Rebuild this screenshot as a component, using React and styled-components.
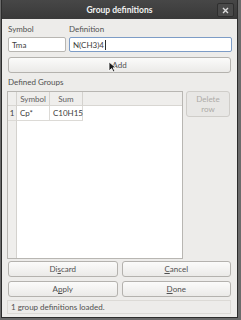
import React from "react";
import styled, { createGlobalStyle } from "styled-components";

const GlobalStyle = createGlobalStyle`
  html, body {
    margin: 0;
    padding: 0;
    background: #4a4a4a;
  }
  body {
    font-family: "Lato", "DejaVu Sans", sans-serif;
    font-size: 8px;
    color: #505050;
  }
`;

const Screen = styled.div`
  width: 241px;
  height: 320px;
  overflow: hidden;
  display: flex;
  background: #6b6b6b;
  padding: 0 4px 3px 2px;
  box-sizing: border-box;
`;

const Window = styled.div`
  flex: 1;
  display: flex;
  flex-direction: column;
  background: #edecea;
  box-shadow: 0 0 0 1px #2c2c2c;
`;

const TitleBar = styled.div`
  height: 19px;
  flex: none;
  display: flex;
  align-items: center;
  justify-content: center;
  position: relative;
  background: linear-gradient(#474747, #393939);
  color: #f2f2f2;
  font-weight: bold;
  font-size: 8.5px;
`;

const CloseButton = styled.div`
  position: absolute;
  right: 3px;
  top: 3px;
  width: 15px;
  height: 12px;
  border: 1px solid #2e2e2e;
  border-radius: 2px;
  background: #4a4a4a;
  display: flex;
  align-items: center;
  justify-content: center;
`;

const Body = styled.div`
  flex: 1;
  display: flex;
  flex-direction: column;
  padding: 5px 5px 3px 6px;
`;

const FieldRow = styled.div`
  display: grid;
  grid-template-columns: 58px 1fr;
  column-gap: 3px;
  row-gap: 2px;
`;

const Label = styled.div`
  height: 11px;
  line-height: 11px;
`;

const Input = styled.div`
  height: 15px;
  box-sizing: border-box;
  border: 1px solid ${(p) => (p.focused ? "#7d9cc6" : "#b8b6b2")};
  background: #ffffff;
  border-radius: 2px;
  padding-left: 3px;
  display: flex;
  align-items: center;
  color: #404040;
`;

const Caret = styled.span`
  display: inline-block;
  width: 1px;
  height: 10px;
  background: #2e2e2e;
  margin-left: 1px;
`;

const Button = styled.div`
  height: ${(p) => p.h || 16}px;
  box-sizing: border-box;
  border: 1px solid #b4b2ae;
  border-radius: 3px;
  background: linear-gradient(#fbfbfa, #ebeae8);
  display: flex;
  flex-direction: column;
  align-items: center;
  justify-content: center;
  color: ${(p) => (p.disabled ? "#adaba7" : "#505050")};
  line-height: 10px;
  text-align: center;
  ${(p) => p.disabled && "background: #e8e7e5; border-color: #cfcdc9;"}
`;

const AddRow = styled.div`
  margin-top: 5px;
  width: 223px;
  position: relative;
`;

const Pointer = styled.svg`
  position: absolute;
  left: 100px;
  top: 4px;
`;

const Section = styled.div`
  margin-top: 4px;
  display: flex;
  flex-direction: column;
`;

const TableRow = styled.div`
  display: flex;
  gap: 3px;
  margin-top: 3px;
  margin-left: -1px;
`;

const Table = styled.div`
  width: 176px;
  height: 168px;
  box-sizing: border-box;
  border: 1px solid #b8b6b2;
  background: #ffffff;
  display: grid;
  grid-template-columns: 9px 33px 33px 1fr;
  grid-template-rows: 14px 15px 1fr;
`;

const HeadCell = styled.div`
  background: #efeeec;
  border-right: ${(p) => (p.last ? "none" : "1px solid #d4d2ce")};
  border-bottom: 1px solid #d8d6d2;
  display: flex;
  align-items: center;
  justify-content: center;
  color: #606060;
`;

const Cell = styled.div`
  border-right: 1px solid #dcdad6;
  border-bottom: 1px solid #dcdad6;
  display: flex;
  align-items: center;
  padding-left: 3px;
  color: #404040;
`;

const RowHead = styled.div`
  background: #efeeec;
  border-right: 1px solid #d4d2ce;
  border-bottom: ${(p) => (p.cell ? "1px solid #dcdad6" : "none")};
  display: flex;
  align-items: center;
  justify-content: center;
  color: #404040;
`;

const SideColumn = styled.div`
  width: 44px;
`;

const Spacer = styled.div`
  flex: 1;
`;

const ButtonGrid = styled.div`
  display: grid;
  grid-template-columns: 1fr 1fr;
  gap: 4px;
  width: 223px;
`;

const StatusBar = styled.div`
  margin-top: 3px;
  margin-left: -1px;
  width: 224px;
  height: 14px;
  box-sizing: border-box;
  border: 1px solid #dcdad6;
  display: flex;
  align-items: center;
  padding-left: 3px;
  color: #505050;
`;

const U = styled.span`
  text-decoration: underline;
`;

export default function App() {
  return (
    <>
      <GlobalStyle />
      <Screen>
        <Window>
          <TitleBar>
            Group definitions
            <CloseButton>
              <svg width="7" height="7" viewBox="0 0 7 7">
                <path d="M1 1L6 6M6 1L1 6" stroke="#dcdcdc" strokeWidth="1.4" />
              </svg>
            </CloseButton>
          </TitleBar>
          <Body>
            <FieldRow>
              <Label>Symbol</Label>
              <Label>Definition</Label>
              <Input>Tma</Input>
              <Input focused>
                N(CH3)4
                <Caret />
              </Input>
            </FieldRow>
            <AddRow>
              <Button>Add</Button>
              <Pointer width="9" height="12" viewBox="0 0 9 12">
                <path d="M1 1L1 10L3.5 7.5L5.5 11L7 10.2L5 6.8L8 6.8Z" fill="#1c1c1c" stroke="#fff" strokeWidth="0.8" />
              </Pointer>
            </AddRow>
            <Section>
              <Label>Defined Groups</Label>
              <TableRow>
                <Table>
                  <HeadCell />
                  <HeadCell>Symbol</HeadCell>
                  <HeadCell>Sum</HeadCell>
                  <HeadCell last />
                  <RowHead cell>1</RowHead>
                  <Cell>Cp*</Cell>
                  <Cell>C10H15</Cell>
                  <div />
                  <RowHead />
                  <div />
                  <div />
                  <div />
                </Table>
                <SideColumn>
                  <Button h={26} disabled>
                    <span>Delete</span>
                    <span>row</span>
                  </Button>
                </SideColumn>
              </TableRow>
            </Section>
            <Spacer />
            <ButtonGrid>
              <Button>
                <span>
                  Di<U>s</U>card
                </span>
              </Button>
              <Button>
                <span>
                  <U>C</U>ancel
                </span>
              </Button>
              <Button>
                <span>
                  A<U>p</U>ply
                </span>
              </Button>
              <Button>
                <span>
                  <U>D</U>one
                </span>
              </Button>
            </ButtonGrid>
            <StatusBar>1 group definitions loaded.</StatusBar>
          </Body>
        </Window>
      </Screen>
    </>
  );
}
